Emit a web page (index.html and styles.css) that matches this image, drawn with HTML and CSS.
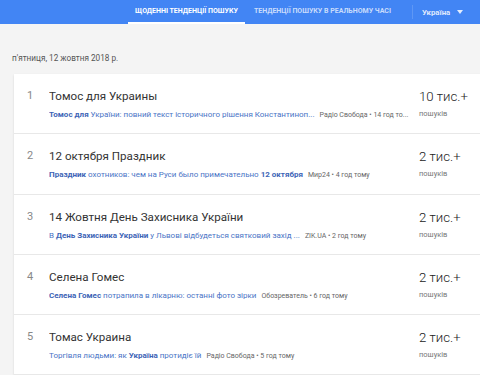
FILE: index.html
```html
<!DOCTYPE html>
<html lang="uk">
<head>
	<meta charset="UTF-8">
	<title>Тенденції пошуку</title>
	<link rel="stylesheet" href="styles.css">
</head>
<body>
<div class="header">
	<div class="tab active">Щоденні тенденції пошуку</div>
	<div class="tab">Тенденції пошуку в реальному часі</div>
	<div class="sep"></div>
	<div class="country">Україна <span class="caret"></span></div>
</div>
<div class="date">п'ятниця, 12 жовтня 2018 р.</div>
<div class="list">
	<div class="row">
		<div class="num">1</div>
		<div class="main">
			<div class="title">Томос для Украины</div>
			<div class="sub"><span class="link"><b>Томос для</b> України: повний текст історичного рішення Константиноп...</span><span class="src">Радіо Свобода • 14 год то...</span></div>
		</div>
		<div class="count"><div class="big">10 тис.+</div><div class="small">пошуків</div></div>
	</div>
	<div class="row">
		<div class="num">2</div>
		<div class="main">
			<div class="title">12 октября Праздник</div>
			<div class="sub"><span class="link"><b>Праздник</b> охотников: чем на Руси было примечательно <b>12 октября</b></span><span class="src">Мир24 • 4 год тому</span></div>
		</div>
		<div class="count"><div class="big">2 тис.+</div><div class="small">пошуків</div></div>
	</div>
	<div class="row">
		<div class="num">3</div>
		<div class="main">
			<div class="title">14 Жовтня День Захисника України</div>
			<div class="sub"><span class="link">В <b>День Захисника України</b> у Львові відбудеться святковий захід ...</span><span class="src">ZIK.UA • 2 год тому</span></div>
		</div>
		<div class="count"><div class="big">2 тис.+</div><div class="small">пошуків</div></div>
	</div>
	<div class="row">
		<div class="num">4</div>
		<div class="main">
			<div class="title">Селена Гомес</div>
			<div class="sub"><span class="link"><b>Селена Гомес</b> потрапила в лікарню: останні фото зірки</span><span class="src">Обозреватель • 6 год тому</span></div>
		</div>
		<div class="count"><div class="big">2 тис.+</div><div class="small">пошуків</div></div>
	</div>
	<div class="row">
		<div class="num">5</div>
		<div class="main">
			<div class="title">Томас Украина</div>
			<div class="sub"><span class="link">Торгівля людьми: як <b>Україна</b> протидіє їй</span><span class="src">Радіо Свобода • 5 год тому</span></div>
		</div>
		<div class="count"><div class="big">2 тис.+</div><div class="small">пошуків</div></div>
	</div>
</div>
</body>
</html>
```

FILE: styles.css
```css
html, body {
	margin: 0;
	padding: 0;
}
body {
	background: #f4f4f4;
	font-family: Roboto, "Liberation Sans", sans-serif;
	overflow: hidden;
	width: 480px;
	height: 375px;
}
.header {
	display: flex;
	align-items: center;
	height: 24px;
	background: #4285f4;
	padding-left: 128px;
	box-sizing: border-box;
	white-space: nowrap;
}
.tab {
	height: 24px;
	line-height: 23px;
	padding: 0 7px;
	font-size: 7px;
	font-weight: 700;
	text-transform: uppercase;
	color: rgba(255, 255, 255, 0.72);
	box-sizing: border-box;
	border-bottom: 2px solid transparent;
}
.tab.active {
	color: #fff;
	border-bottom-color: #fff;
	margin-right: 2px;
}
.sep {
	width: 1px;
	height: 14px;
	background: rgba(255, 255, 255, 0.15);
	margin-left: 14px;
}
.country {
	display: flex;
	align-items: center;
	margin-left: 9px;
	font-size: 7.8px;
	font-weight: 700;
	color: rgba(255, 255, 255, 0.85);
}
.caret {
	width: 0;
	height: 0;
	border-left: 3px solid transparent;
	border-right: 3px solid transparent;
	border-top: 4px solid rgba(255, 255, 255, 0.85);
	margin-left: 7px;
}
.date {
	margin: 28px 0 10px 12px;
	font-size: 8.2px;
	line-height: 12px;
	color: #555;
}
.list {
	margin-left: 14px;
	width: 500px;
	background: #fff;
	box-shadow: 0 1px 2px rgba(0, 0, 0, 0.12);
}
.row {
	display: flex;
	height: 60.3px;
	box-sizing: border-box;
	border-bottom: 1px solid #e8e8e8;
}
.num {
	flex-shrink: 0;
	width: 35px;
	padding: 15px 0 0 13px;
	box-sizing: border-box;
	font-size: 11px;
	line-height: 14px;
	color: #888;
}
.main {
	flex-shrink: 0;
	width: 370px;
	padding-top: 15px;
	white-space: nowrap;
	overflow: hidden;
}
.title {
	font-size: 11.6px;
	line-height: 14px;
	color: #333;
}
.sub {
	margin-top: 7px;
	font-size: 8px;
	line-height: 10px;
}
.link {
	color: #4a74c6;
}
.link b {
	color: #3d64b6;
}
.src {
	color: #666;
	font-size: 7px;
	margin-left: 5px;
}
.count {
	flex-shrink: 0;
	padding-top: 14px;
	white-space: nowrap;
}
.big {
	font-size: 13.2px;
	font-weight: 300;
	line-height: 18px;
	color: #222;
}
.small {
	margin-top: 3px;
	font-size: 7.5px;
	line-height: 10px;
	color: #777;
}
```
